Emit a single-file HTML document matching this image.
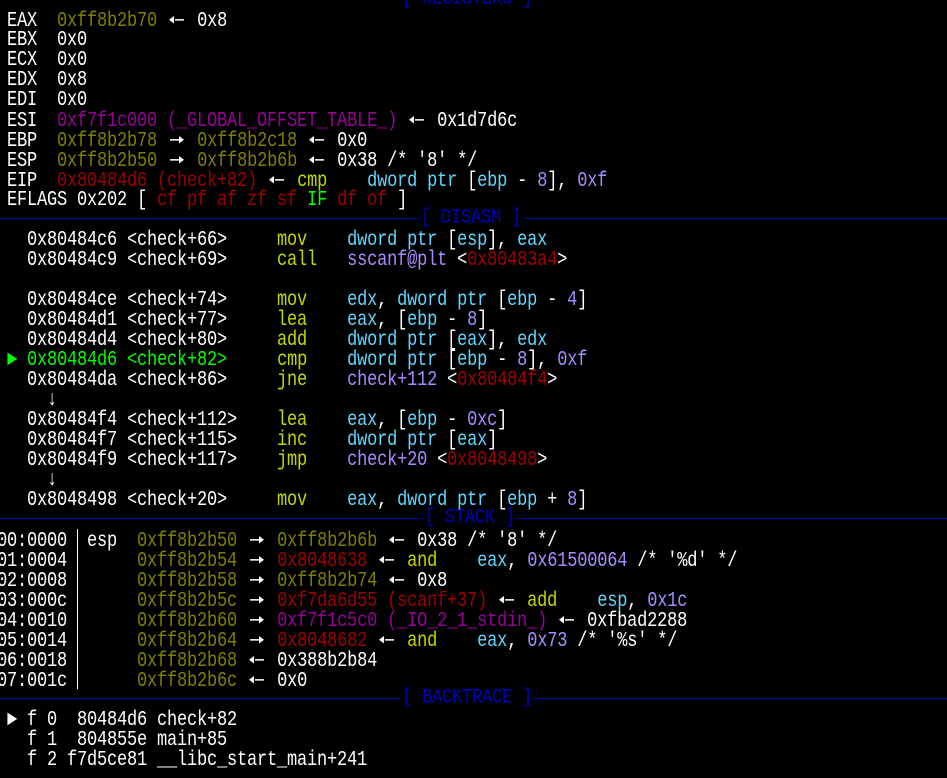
<!DOCTYPE html>
<html><head><meta charset="utf-8"><style>
html,body{margin:0;padding:0;background:#000;width:947px;height:778px;overflow:hidden;position:relative}
#t{position:absolute;left:7px;top:-9px;transform:scaleY(1.25);transform-origin:0 0;font-family:"Liberation Mono",monospace;font-size:17px;letter-spacing:-0.2px;color:#fff}
#t div{height:16px;line-height:16px;white-space:pre}
.s{margin-left:-10px}
.y{color:#808000}.m{color:#980098}.r{color:#a00000}.c{color:#5fd7ff}.p{color:#a98bff}.g{color:#c4d800}.G{color:#00ff00}.w{color:#fff}
.a{display:inline-block;width:20px;height:16px;vertical-align:-4px}
.rule{position:absolute;left:0;width:947px;height:1px;background:#0000b0}
.h{position:absolute;background:#000;color:#0000c0;font-family:"Liberation Mono",monospace;font-size:17px;letter-spacing:-0.2px;padding:0 2px;height:20px;line-height:20px;white-space:pre;transform:scaleY(1.2)}
.sep{position:absolute;left:77px;top:529px;width:1px;height:160px;background:#fff}
</style></head><body>
<svg width="0" height="0" style="position:absolute"><defs>
<g id="L"><polygon points="2,7 7,4 7,10" fill="#fff"/><rect x="8" y="6.5" width="9" height="1.2" fill="#fff"/></g>
<g id="R"><rect x="3" y="6.5" width="9" height="1.2" fill="#fff"/><polygon points="17,7 12,4 12,10" fill="#fff"/></g>
</defs></svg>
<div class="rule" style="top:-1px"></div>
<div class="h" style="left:400px;top:-10px">[ REGISTERS ]</div>
<div class="rule" style="top:218px"></div>
<div class="h" style="left:419px;top:209px">[ DISASM ]</div>
<div class="rule" style="top:518px"></div>
<div class="h" style="left:423px;top:509px">[ STACK ]</div>
<div class="rule" style="top:698px"></div>
<div class="h" style="left:400px;top:689px">[ BACKTRACE ]</div>
<div class="sep"></div>
<div id="t">
<div> </div>
<div>EAX  <span class="y">0xff8b2b70</span> <svg class="a"><use href="#L"/></svg> 0x8</div>
<div>EBX  0x0</div>
<div>ECX  0x0</div>
<div>EDX  0x8</div>
<div>EDI  0x0</div>
<div>ESI  <span class="m">0xf7f1c000 (_GLOBAL_OFFSET_TABLE_)</span> <svg class="a"><use href="#L"/></svg> 0x1d7d6c</div>
<div>EBP  <span class="y">0xff8b2b78</span> <svg class="a"><use href="#R"/></svg> <span class="y">0xff8b2c18</span> <svg class="a"><use href="#L"/></svg> 0x0</div>
<div>ESP  <span class="y">0xff8b2b50</span> <svg class="a"><use href="#R"/></svg> <span class="y">0xff8b2b6b</span> <svg class="a"><use href="#L"/></svg> 0x38 /* '8' */</div>
<div>EIP  <span class="r">0x80484d6 (check+82)</span> <svg class="a"><use href="#L"/></svg> <span class="g">cmp</span>    <span class="c">dword ptr</span> [<span class="c">ebp</span> - <span class="p">8</span>], <span class="p">0xf</span></div>
<div>EFLAGS 0x202 [ <span class="r">cf pf af zf sf</span> <span class="G">IF</span> <span class="r">df of</span> ]</div>
<div> </div>
<div>  0x80484c6 &lt;check+66&gt;     <span class="g">mov</span>    <span class="c">dword ptr</span> [<span class="c">esp</span>], <span class="c">eax</span></div>
<div>  0x80484c9 &lt;check+69&gt;     <span class="g">call</span>   <span class="p">sscanf@plt</span> &lt;<span class="r">0x80483a4</span>&gt;</div>
<div> </div>
<div>  0x80484ce &lt;check+74&gt;     <span class="g">mov</span>    <span class="c">edx</span>, <span class="c">dword ptr</span> [<span class="c">ebp</span> - <span class="p">4</span>]</div>
<div>  0x80484d1 &lt;check+77&gt;     <span class="g">lea</span>    <span class="c">eax</span>, [<span class="c">ebp</span> - <span class="p">8</span>]</div>
<div>  0x80484d4 &lt;check+80&gt;     <span class="g">add</span>    <span class="c">dword ptr</span> [<span class="c">eax</span>], <span class="c">edx</span></div>
<div><span class="G">► 0x80484d6 &lt;check+82&gt;</span>     <span class="g">cmp</span>    <span class="c">dword ptr</span> [<span class="c">ebp</span> - <span class="p">8</span>], <span class="p">0xf</span></div>
<div>  0x80484da &lt;check+86&gt;     <span class="g">jne</span>    <span class="p">check+112</span> &lt;<span class="r">0x80484f4</span>&gt;</div>
<div>    ↓</div>
<div>  0x80484f4 &lt;check+112&gt;    <span class="g">lea</span>    <span class="c">eax</span>, [<span class="c">ebp</span> - <span class="p">0xc</span>]</div>
<div>  0x80484f7 &lt;check+115&gt;    <span class="g">inc</span>    <span class="c">dword ptr</span> [<span class="c">eax</span>]</div>
<div>  0x80484f9 &lt;check+117&gt;    <span class="g">jmp</span>    <span class="p">check+20</span> &lt;<span class="r">0x8048498</span>&gt;</div>
<div>    ↓</div>
<div>  0x8048498 &lt;check+20&gt;     <span class="g">mov</span>    <span class="c">eax</span>, <span class="c">dword ptr</span> [<span class="c">ebp</span> + <span class="p">8</span>]</div>
<div> </div>
<div class="s">00:0000  esp  <span class="y">0xff8b2b50</span> <svg class="a"><use href="#R"/></svg> <span class="y">0xff8b2b6b</span> <svg class="a"><use href="#L"/></svg> 0x38 /* '8' */</div>
<div class="s">01:0004       <span class="y">0xff8b2b54</span> <svg class="a"><use href="#R"/></svg> <span class="r">0x8048638</span> <svg class="a"><use href="#L"/></svg> <span class="g">and</span>    <span class="c">eax</span>, <span class="p">0x61500064</span> /* '%d' */</div>
<div class="s">02:0008       <span class="y">0xff8b2b58</span> <svg class="a"><use href="#R"/></svg> <span class="y">0xff8b2b74</span> <svg class="a"><use href="#L"/></svg> 0x8</div>
<div class="s">03:000c       <span class="y">0xff8b2b5c</span> <svg class="a"><use href="#R"/></svg> <span class="r">0xf7da6d55 (scanf+37)</span> <svg class="a"><use href="#L"/></svg> <span class="g">add</span>    <span class="c">esp</span>, <span class="p">0x1c</span></div>
<div class="s">04:0010       <span class="y">0xff8b2b60</span> <svg class="a"><use href="#R"/></svg> <span class="m">0xf7f1c5c0 (_IO_2_1_stdin_)</span> <svg class="a"><use href="#L"/></svg> 0xfbad2288</div>
<div class="s">05:0014       <span class="y">0xff8b2b64</span> <svg class="a"><use href="#R"/></svg> <span class="r">0x8048682</span> <svg class="a"><use href="#L"/></svg> <span class="g">and</span>    <span class="c">eax</span>, <span class="p">0x73</span> /* '%s' */</div>
<div class="s">06:0018       <span class="y">0xff8b2b68</span> <svg class="a"><use href="#L"/></svg> 0x388b2b84</div>
<div class="s">07:001c       <span class="y">0xff8b2b6c</span> <svg class="a"><use href="#L"/></svg> 0x0</div>
<div> </div>
<div>► f 0  80484d6 check+82</div>
<div>  f 1  804855e main+85</div>
<div>  f 2 f7d5ce81 __libc_start_main+241</div>
</div>
</body></html>
